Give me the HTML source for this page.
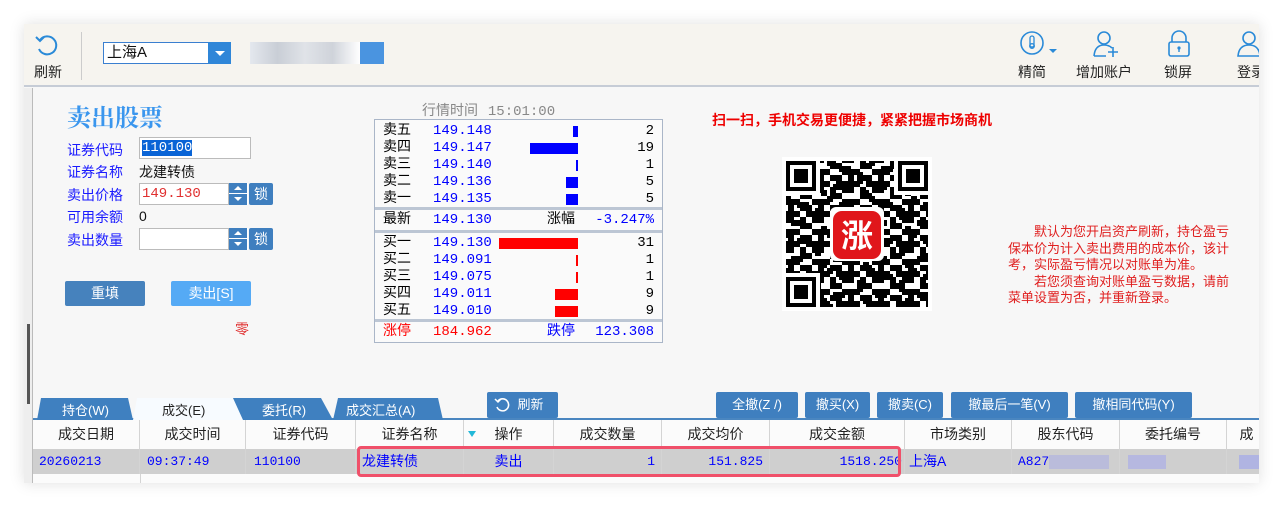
<!DOCTYPE html>
<html><head><meta charset="utf-8"><style>
*{margin:0;padding:0;box-sizing:border-box}
body{width:1283px;height:506px;background:#fff;position:relative;overflow:hidden;font-family:"Liberation Sans","Noto Sans CJK SC",sans-serif;font-size:14px}
.a{position:absolute;white-space:nowrap}
.win{position:absolute;left:24px;top:24px;width:1235px;height:459px;background:#f7f7f7;box-shadow:0 0 14px rgba(0,0,0,.13);overflow:hidden}
.tb{position:absolute;left:0;top:0;width:1235px;height:63px;background:#f6f4ef;border-bottom:2px solid #c6ccd6}
.lb{color:#1a1aff;font-size:14px}
.mono{font-family:"Liberation Mono","Noto Sans CJK SC",monospace}
.bl{color:#0000ff}
.btn{position:absolute;background:#3f7fbf;color:#fff;font-size:14px;text-align:center;border-radius:2px}
.ql{position:absolute;left:0;width:285px;height:17px;font-size:14px;line-height:17px}
.ql span{position:absolute}
.th{position:absolute;top:396px;height:29px;border-right:1px solid #d4d4d4;text-align:center;line-height:29px;color:#222;font-size:14px;background:#fbfbfb}
.td{position:absolute;top:425px;height:25px;border-right:1px solid #d4d4d4;line-height:25px;color:#0000ff;font-size:13px;background:#cfcfcf}
.spin{position:absolute;width:19px;height:22px;background:#3f7fbf;border-right:1px solid #fff}
.spin:before{content:"";position:absolute;left:5px;top:3px;border:4px solid transparent;border-bottom:4px solid #fff;border-top:0}
.spin:after{content:"";position:absolute;left:5px;top:14px;border:4px solid transparent;border-top:4px solid #fff;border-bottom:0}
.spin i{position:absolute;left:0;top:10px;width:19px;height:1px;background:#fff}
</style></head><body>
<div class="win">
 <div class="tb">
  <svg class="a" style="left:10px;top:8px" width="26" height="26" viewBox="0 0 26 26"><path d="M6 8 A9 9 0 1 1 5 17" fill="none" stroke="#2a8ad8" stroke-width="2"/><path d="M2 5 L6 9 L10 5" fill="none" stroke="#2a8ad8" stroke-width="2"/></svg>
  <div class="a" style="left:10px;top:38px;font-size:14px;color:#222">刷新</div>
  <div class="a" style="left:57px;top:8px;width:1px;height:48px;background:#ccc"></div>
  <div class="a" style="left:79px;top:18px;width:128px;height:22px;border:1px solid #3a7fd0;background:#fff;font-size:15px;line-height:20px;padding-left:3px;color:#111">上海A</div>
  <div class="a" style="left:184px;top:18px;width:23px;height:22px;background:#2f86d8"><div class="a" style="left:7px;top:9px;border:5px solid transparent;border-top:5px solid #fff;border-bottom:0"></div></div>
  <div class="a" style="left:226px;top:18px;width:110px;height:22px;background:linear-gradient(90deg,#e4e8ee,#c9ced6,#e0e3e8,#cfd3da,#fff)"></div>
  <div class="a" style="left:336px;top:18px;width:24px;height:22px;background:#4a94e0"></div>
  <svg class="a" style="left:995px;top:6px" width="40" height="30" viewBox="0 0 40 30"><circle cx="13" cy="13" r="11" fill="none" stroke="#2a8ad8" stroke-width="1.6"/><rect x="11" y="6" width="4" height="11" rx="2" fill="none" stroke="#2a8ad8" stroke-width="1.3"/><circle cx="13" cy="16" r="2.3" fill="none" stroke="#2a8ad8" stroke-width="1.3"/><path d="M30 19 L38 19 L34 23Z" fill="#2a8ad8"/></svg>
  <div class="a" style="left:994px;top:38px;color:#222">精简</div>
  <svg class="a" style="left:1068px;top:6px" width="30" height="28" viewBox="0 0 30 28"><circle cx="12" cy="8" r="6" fill="none" stroke="#2a8ad8" stroke-width="1.6"/><path d="M2 26 Q3 15 12 15 Q17 15 20 18 M2 26 L14 26" fill="none" stroke="#2a8ad8" stroke-width="1.6"/><path d="M21 17 V27 M16 22 H26" stroke="#2a8ad8" stroke-width="1.6"/></svg>
  <div class="a" style="left:1052px;top:38px;color:#222">增加账户</div>
  <svg class="a" style="left:1142px;top:6px" width="26" height="28" viewBox="0 0 26 28"><path d="M6 12 V8 A7 7 0 0 1 20 8 V12" fill="none" stroke="#2a8ad8" stroke-width="1.6"/><rect x="3" y="12" width="20" height="14" rx="2" fill="none" stroke="#2a8ad8" stroke-width="1.6"/><circle cx="13" cy="18" r="1.6" fill="#2a8ad8"/><path d="M13 19 V22" stroke="#2a8ad8" stroke-width="1.4"/></svg>
  <div class="a" style="left:1140px;top:38px;color:#222">锁屏</div>
  <svg class="a" style="left:1212px;top:6px" width="26" height="28" viewBox="0 0 26 28"><circle cx="13" cy="8" r="6" fill="none" stroke="#2a8ad8" stroke-width="1.6"/><path d="M2 26 Q3 15 13 15 Q23 15 24 26 Z" fill="none" stroke="#2a8ad8" stroke-width="1.6"/></svg>
  <div class="a" style="left:1213px;top:38px;color:#222">登录</div>
 </div>
 <div class="a" style="left:0;top:64px;width:9px;height:395px;background:#eee;border-right:1px solid #bbb"></div>
 <div class="a" style="left:3px;top:300px;width:3px;height:80px;background:#555"></div>

 <div class="a" style="left:43px;top:74px;font-size:24px;color:#3a96ee;font-family:'Noto Serif CJK SC',serif;font-weight:bold">卖出股票</div>
 <div class="a lb" style="left:43px;top:116px">证券代码</div>
 <div class="a lb" style="left:43px;top:138px">证券名称</div>
 <div class="a lb" style="left:43px;top:161px">卖出价格</div>
 <div class="a lb" style="left:43px;top:183px">可用余额</div>
 <div class="a lb" style="left:43px;top:206px">卖出数量</div>
 <div class="a" style="left:115px;top:113px;width:112px;height:22px;background:#fff;border:1px solid #bbb"><span class="a mono" style="left:2px;top:2px;background:#0a64d6;color:#fff;font-size:14px;line-height:16px">110100</span></div>
 <div class="a" style="left:115px;top:138px;color:#111">龙建转债</div>
 <div class="a" style="left:115px;top:159px;width:90px;height:22px;background:#fff;border:1px solid #bbb"><span class="a mono" style="left:2px;top:2px;color:#e03030">149.130</span></div>
 <div class="spin" style="left:205px;top:159px"><i></i></div>
 <div class="btn" style="left:225px;top:159px;width:24px;height:22px;line-height:22px">锁</div>
 <div class="a" style="left:115px;top:184px;color:#111">0</div>
 <div class="a" style="left:115px;top:204px;width:90px;height:22px;background:#fff;border:1px solid #bbb"></div>
 <div class="spin" style="left:205px;top:204px"><i></i></div>
 <div class="btn" style="left:225px;top:204px;width:24px;height:22px;line-height:22px">锁</div>
 <div class="btn" style="left:41px;top:257px;width:80px;height:25px;line-height:25px;background:#4682bd">重填</div>
 <div class="btn" style="left:147px;top:257px;width:80px;height:25px;line-height:25px;background:#55aaf5">卖出[S]</div>
 <div class="a" style="left:211px;top:295px;color:#e03030">零</div>

 <div class="a" style="left:398px;top:76px;color:#888">行情时间 <span class="mono" style="margin-left:6px">15:01:00</span></div>
 <div class="a mono" style="left:350px;top:95px;width:289px;height:224px;border:1px solid #aab6c8;background:#fafafa">
  <div class="a" style="left:0;top:87px;width:287px;height:3px;background:#bcc6d4"></div>
  <div class="a" style="left:0;top:110px;width:287px;height:3px;background:#bcc6d4"></div>
  <div class="a" style="left:0;top:199px;width:287px;height:3px;background:#bcc6d4"></div>
  <div class="ql" style="top:3px"><span style="left:8px">卖五</span><span class="bl" style="left:58px">149.148</span><span style="left:198px;top:3px;width:5px;height:11px;background:#0000ff"></span><span style="right:6px">2</span></div>
  <div class="ql" style="top:20px"><span style="left:8px">卖四</span><span class="bl" style="left:58px">149.147</span><span style="left:155px;top:3px;width:48px;height:11px;background:#0000ff"></span><span style="right:6px">19</span></div>
  <div class="ql" style="top:37px"><span style="left:8px">卖三</span><span class="bl" style="left:58px">149.140</span><span style="left:201px;top:3px;width:2px;height:11px;background:#0000ff"></span><span style="right:6px">1</span></div>
  <div class="ql" style="top:54px"><span style="left:8px">卖二</span><span class="bl" style="left:58px">149.136</span><span style="left:191px;top:3px;width:12px;height:11px;background:#0000ff"></span><span style="right:6px">5</span></div>
  <div class="ql" style="top:71px"><span style="left:8px">卖一</span><span class="bl" style="left:58px">149.135</span><span style="left:191px;top:3px;width:12px;height:11px;background:#0000ff"></span><span style="right:6px">5</span></div>
  <div class="ql" style="top:92px"><span style="left:8px">最新</span><span class="bl" style="left:58px">149.130</span><span style="left:172px">涨幅</span><span class="bl" style="right:6px">-3.247%</span></div>
  <div class="ql" style="top:115px"><span style="left:8px">买一</span><span class="bl" style="left:58px">149.130</span><span style="left:124px;top:3px;width:79px;height:11px;background:#ff0000"></span><span style="right:6px">31</span></div>
  <div class="ql" style="top:132px"><span style="left:8px">买二</span><span class="bl" style="left:58px">149.091</span><span style="left:201px;top:3px;width:2px;height:11px;background:#ff0000"></span><span style="right:6px">1</span></div>
  <div class="ql" style="top:149px"><span style="left:8px">买三</span><span class="bl" style="left:58px">149.075</span><span style="left:201px;top:3px;width:2px;height:11px;background:#ff0000"></span><span style="right:6px">1</span></div>
  <div class="ql" style="top:166px"><span style="left:8px">买四</span><span class="bl" style="left:58px">149.011</span><span style="left:180px;top:3px;width:23px;height:11px;background:#ff0000"></span><span style="right:6px">9</span></div>
  <div class="ql" style="top:183px"><span style="left:8px">买五</span><span class="bl" style="left:58px">149.010</span><span style="left:180px;top:3px;width:23px;height:11px;background:#ff0000"></span><span style="right:6px">9</span></div>
  <div class="ql" style="top:204px"><span style="left:8px;color:#f00">涨停</span><span style="left:58px;color:#f00">184.962</span><span class="bl" style="left:172px">跌停</span><span class="bl" style="right:6px">123.308</span></div>
 </div>

 <div class="a" style="left:688px;top:86px;color:#ee0000;font-weight:bold;font-size:14px">扫一扫，手机交易更便捷，紧紧把握市场商机</div>
 <svg class="a" style="left:758px;top:133px" width="150" height="154" viewBox="0 0 150 154">
  <defs>
   <pattern id="p" width="30" height="30" patternUnits="userSpaceOnUse">
    <rect x="0" y="0" width="6" height="6"/><rect x="6" y="0" width="6" height="6"/><rect x="18" y="0" width="6" height="12"/>
    <rect x="0" y="12" width="12" height="6"/><rect x="24" y="6" width="6" height="6"/><rect x="12" y="12" width="6" height="6"/>
    <rect x="6" y="18" width="6" height="12"/><rect x="18" y="18" width="12" height="6"/><rect x="24" y="24" width="6" height="6"/>
    <rect x="0" y="24" width="6" height="6"/><rect x="12" y="24" width="6" height="6"/>
   </pattern>
   <pattern id="q" x="3" y="3" width="42" height="36" patternUnits="userSpaceOnUse">
    <rect x="0" y="0" width="6" height="6"/><rect x="12" y="6" width="12" height="6"/><rect x="30" y="12" width="6" height="12"/><rect x="6" y="24" width="12" height="6"/><rect x="36" y="30" width="6" height="6"/>
   </pattern>
  </defs>
  <rect width="150" height="154" fill="#fff"/>
  <rect x="4" y="4" width="142" height="146" fill="url(#p)"/>
  <rect x="4" y="4" width="142" height="146" fill="url(#q)"/>
  <g>
   <rect x="2" y="2" width="36" height="36" fill="#fff"/><rect x="112" y="2" width="36" height="36" fill="#fff"/><rect x="2" y="116" width="36" height="36" fill="#fff"/>
   <rect x="4" y="4" width="30" height="30"/><rect x="116" y="4" width="30" height="30"/><rect x="4" y="120" width="30" height="30"/>
   <rect x="8" y="8" width="22" height="22" fill="#fff"/><rect x="120" y="8" width="22" height="22" fill="#fff"/><rect x="8" y="124" width="22" height="22" fill="#fff"/>
   <rect x="12" y="12" width="14" height="14"/><rect x="124" y="12" width="14" height="14"/><rect x="12" y="128" width="14" height="14"/>
  </g>
  <rect x="48" y="50" width="54" height="54" rx="6" fill="#fff"/>
  <rect x="51" y="54" width="48" height="48" rx="9" fill="#e0161b"/>
  <text x="75" y="90" text-anchor="middle" font-size="32" font-weight="bold" fill="#fff" font-family="Noto Sans CJK SC,sans-serif">涨</text>
 </svg>
 <div class="a" style="left:984px;top:200px;color:#e02020;font-size:13px;line-height:16.5px;white-space:normal;width:260px">　　默认为您开启资产刷新，持仓盈亏<br>保本价为计入卖出费用的成本价，该计<br>考，实际盈亏情况以对账单为准。<br>　　若您须查询对账单盈亏数据，请前<br>菜单设置为否，并重新登录。</div>

 <div class="a" style="left:9px;top:394px;width:1226px;height:2px;background:#4a86c0"></div>
 <svg class="a" style="left:9px;top:372px" width="415" height="24" viewBox="0 0 415 24">
  <path d="M4 24 L8 2 H95 L100 24Z" fill="#3f80c0"/>
  <path d="M300 24 L305 2 H405 L410 24Z" fill="#3f80c0"/>
  <path d="M195 24 L200 2 H288 L300 24Z" fill="#3f80c0"/>
  <path d="M100 24 L104 2 H200 L210 24Z" fill="#f7fbff"/>
 </svg>
 <div class="a" style="left:38px;top:376px;color:#fff;font-size:13px">持仓(W)</div>
 <div class="a" style="left:138px;top:376px;color:#222;font-size:13px">成交(E)</div>
 <div class="a" style="left:238px;top:376px;color:#fff;font-size:13px">委托(R)</div>
 <div class="a" style="left:322px;top:376px;color:#fff;font-size:13px">成交汇总(A)</div>
 <div class="btn" style="left:463px;top:368px;width:71px;height:26px;line-height:26px;font-size:13px;padding-left:16px">刷新</div>
 <svg class="a" style="left:470px;top:373px" width="16" height="16" viewBox="0 0 16 16"><path d="M4 4 A6 6 0 1 1 3 10" fill="none" stroke="#fff" stroke-width="1.6"/><path d="M1 2 L4 5 L7 2" fill="none" stroke="#fff" stroke-width="1.5"/></svg>
 <div class="btn" style="left:692px;top:368px;width:82px;height:26px;line-height:26px;font-size:13px">全撤(Z /)</div>
 <div class="btn" style="left:781px;top:368px;width:65px;height:26px;line-height:26px;font-size:13px">撤买(X)</div>
 <div class="btn" style="left:853px;top:368px;width:66px;height:26px;line-height:26px;font-size:13px">撤卖(C)</div>
 <div class="btn" style="left:927px;top:368px;width:117px;height:26px;line-height:26px;font-size:13px">撤最后一笔(V)</div>
 <div class="btn" style="left:1051px;top:368px;width:117px;height:26px;line-height:26px;font-size:13px">撤相同代码(Y)</div>

 <div class="th" style="left:9px;width:107px">成交日期</div>
 <div class="th" style="left:116px;width:106px">成交时间</div>
 <div class="th" style="left:222px;width:110px">证券代码</div>
 <div class="th" style="left:332px;width:108px">证券名称</div>
 <div class="th" style="left:440px;width:90px">操作</div>
 <div class="a" style="left:444px;top:407px;border:4px solid transparent;border-top:6px solid #22b8d8"></div>
 <div class="th" style="left:530px;width:108px">成交数量</div>
 <div class="th" style="left:638px;width:108px">成交均价</div>
 <div class="th" style="left:746px;width:135px">成交金额</div>
 <div class="th" style="left:881px;width:107px">市场类别</div>
 <div class="th" style="left:988px;width:108px">股东代码</div>
 <div class="th" style="left:1096px;width:107px">委托编号</div>
 <div class="th" style="left:1203px;width:40px">成</div>

 <div class="td mono" style="left:9px;width:107px;padding-left:6px">20260213</div>
 <div class="td mono" style="left:116px;width:106px;padding-left:7px">09:37:49</div>
 <div class="td mono" style="left:222px;width:110px;padding-left:8px">110100</div>
 <div class="td" style="left:332px;width:108px;padding-left:6px;font-size:14px">龙建转债</div>
 <div class="td" style="left:440px;width:90px;text-align:center;font-size:14px">卖出</div>
 <div class="td mono" style="left:530px;width:108px;text-align:right;padding-right:6px">1</div>
 <div class="td mono" style="left:638px;width:108px;text-align:right;padding-right:6px">151.825</div>
 <div class="td mono" style="left:746px;width:135px;text-align:right;padding-right:2px">1518.250</div>
 <div class="td" style="left:881px;width:107px;padding-left:4px;font-size:14px">上海A</div>
 <div class="td mono" style="left:988px;width:108px;padding-left:6px">A827<span style="display:inline-block;width:60px;height:14px;vertical-align:middle;background:#b0b4e0;opacity:.7"></span></div>
 <div class="td" style="left:1096px;width:107px"><span style="display:inline-block;margin:6px 0 0 8px;width:38px;height:14px;background:#b6b8e0"></span></div>
 <div class="td" style="left:1203px;width:40px"><span style="display:inline-block;margin:6px 0 0 12px;width:30px;height:14px;background:#b0b4e2"></span></div>
 <div class="a" style="left:9px;top:450px;width:1226px;height:9px;background:#fbfbfb"></div>
 <div class="a" style="left:116px;top:450px;width:1px;height:9px;background:#d4d4d4"></div>
 <div class="a" style="left:333px;top:422px;width:544px;height:31px;border:3px solid #f0506a;border-radius:4px"></div>
</div>
</body></html>
